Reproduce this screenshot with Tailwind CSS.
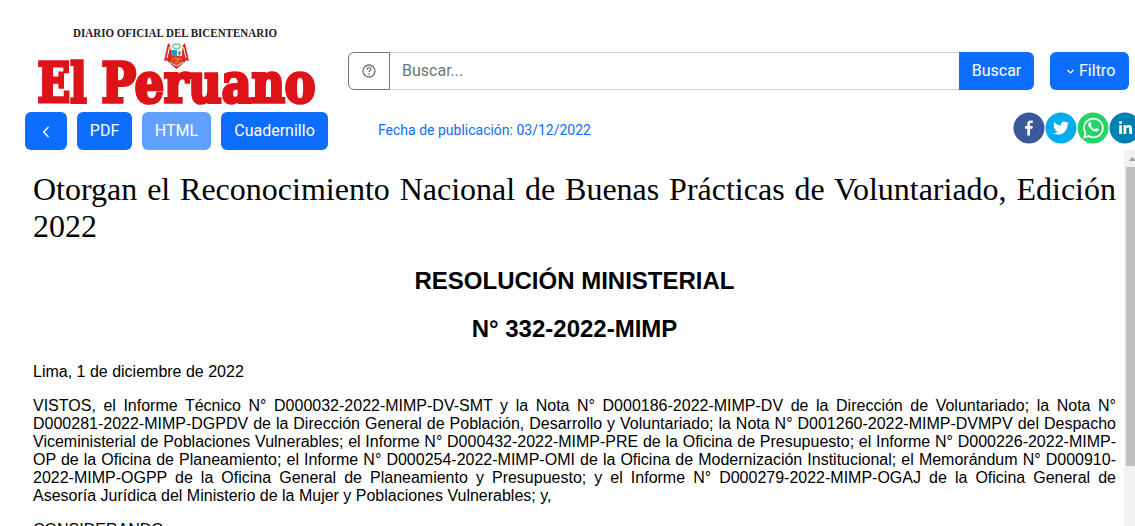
<!DOCTYPE html>
<html lang="es">
<head>
<meta charset="utf-8">
<title>El Peruano</title>
<script src="https://cdn.jsdelivr.net/npm/@tailwindcss/browser@4"></script>
</head>
<body class="bg-white w-[1135px] h-[526px] overflow-hidden flex flex-col font-['Roboto',sans-serif] text-base text-white">
<header class="h-28 shrink-0 flex">
  <svg class="w-[348px] h-28 shrink-0" viewBox="0 0 348 112">
    <text x="73" y="37" font-family="Liberation Serif" font-weight="700" font-size="11.5" fill="#222" textLength="204" lengthAdjust="spacingAndGlyphs">DIARIO OFICIAL DEL BICENTENARIO</text>
    <path d="M168 43l2 2 1.500 10 4 7-6-2-5.500 1zM185 43l-2 2-1.500 10-4 7 6-2 5.500 1z" fill="#d9262d"/>
    <path d="M169.500 47l-2.500 11M183.500 47l2.500 11" stroke="#fff" stroke-width="1"/>
    <path d="M167 61l9.500 8 9.500-8-4-3h-11z" fill="#c9282b"/>
    <path d="M169 62l7.500 4 7.500-4" fill="none" stroke="#f5d9d2" stroke-width="1"/>
    <path d="M171 50h11v8q0 5-5.500 7-5.500-2-5.500-7z" fill="#fff"/>
    <path d="M171 50h6v6h-6z" fill="#2f92c6"/>
    <path d="M177 50h5v6h-5z" fill="#e6f2e5"/>
    <path d="M179.500 51v5M178 53h3" stroke="#4ba35a" stroke-width="1.300"/>
    <path d="M171 56h11v2q0 5-5.500 7-5.500-2-5.500-7z" fill="#dc3b20"/>
    <path d="M173 60q3-4 4-1t3-1M175 62h3" fill="none" stroke="#f5a33a" stroke-width="1"/>
    <ellipse cx="176.500" cy="46.300" rx="3.700" ry="2.400" fill="none" stroke="#6fd292" stroke-width="1.500"/>
    <g font-family="DejaVu Serif" font-weight="700" font-size="55" fill="#de1219" stroke="#de1219" stroke-width="3.600">
      <text y="102" x="37.500" textLength="49" lengthAdjust="spacingAndGlyphs">El</text>
      <text y="102" x="101.500" textLength="214" lengthAdjust="spacingAndGlyphs">Peruano</text>
    </g>
  </svg>
  <div class="flex mt-[52px] h-[38px] w-[686px]">
    <div class="w-[42px] border border-[#6c757d] rounded-l-md flex items-center justify-center">
      <svg class="w-3.5 h-3.5" viewBox="0 0 14 14" fill="none" stroke="#6c757d" stroke-width="1.300"><circle cx="7" cy="7" r="6"/><path d="M5.100 5.700q0-2 1.900-2t1.900 1.700c0 1.200-1.900 1.200-1.900 2.700M7 9.300v1.400"/></svg>
    </div>
    <div class="flex-1 border-y border-[#ced4da] px-3 leading-9 text-[#6c757d]">Buscar...</div>
    <div class="w-[75px] bg-[#0d6efd] rounded-r-md text-center leading-[38px]">Buscar</div>
  </div>
  <div class="ml-4 mt-[52px] w-[79px] h-[38px] bg-[#0d6efd] rounded-md flex items-center pl-4 gap-1">
    <svg class="w-[9px] h-[9px] shrink-0 mt-px" viewBox="0 0 9 9" fill="none" stroke="#fff" stroke-width="1.200"><path d="M1.500 3l3 3 3-3"/></svg>
    <span>Filtro</span>
  </div>
</header>
<div class="h-[38px] shrink-0 flex pl-[25px] leading-[38px] text-center">
  <div class="shrink-0 w-[42px] bg-[#0d6efd] rounded-md flex items-center justify-center">
    <svg class="w-3 h-3 mt-0.5" viewBox="0 0 12 12" fill="none" stroke="#fff" stroke-width="1.400"><path d="M8.500 1L3.700 6l4.800 5"/></svg>
  </div>
  <div class="shrink-0 ml-2.5 w-[55px] bg-[#0d6efd] rounded-md">PDF</div>
  <div class="shrink-0 ml-2.5 w-[69px] bg-[#0d6efd] opacity-65 rounded-md">HTML</div>
  <div class="shrink-0 ml-2.5 w-[107px] bg-[#0d6efd] rounded-md">Cuadernillo</div>
  <div class="shrink-0 ml-[50px] w-[635px] text-left text-sm leading-[37px] text-[#0d6efd]">Fecha de publicación: 03/12/2022</div>
  <svg class="w-8 h-8 shrink-0" viewBox="0 0 64 64" fill="#fff"><circle cx="32" cy="32" r="31" fill="#3b5998"/><path d="M34.1,47V33.3h4.6l0.7-5.3h-5.3v-3.4c0-1.5,0.4-2.6,2.6-2.6l2.8,0v-4.8c-0.5-0.1-2.2-0.2-4.1-0.2 c-4.1,0-6.9,2.5-6.9,7V28H24v5.3h4.5V47H34.1z"/></svg>
  <svg class="w-8 h-8 shrink-0" viewBox="0 0 64 64" fill="#fff"><circle cx="32" cy="32" r="31" fill="#00aced"/><path d="M48,22.1c-1.2,0.5-2.4,0.9-3.8,1c1.4-0.8,2.4-2.1,2.9-3.6c-1.3,0.8-2.7,1.3-4.2,1.6 C41.7,19.8,40,19,38.2,19c-3.6,0-6.6,2.9-6.6,6.6c0,0.5,0.1,1,0.2,1.5c-5.5-0.3-10.3-2.9-13.5-6.9c-0.6,1-0.9,2.1-0.9,3.3 c0,2.3,1.2,4.3,2.9,5.5c-1.1,0-2.1-0.3-3-0.8c0,0,0,0.1,0,0.1c0,3.2,2.3,5.8,5.3,6.4c-0.6,0.1-1.1,0.2-1.7,0.2c-0.4,0-0.8,0-1.2-0.1 c0.8,2.6,3.3,4.5,6.1,4.6c-2.2,1.8-5.1,2.8-8.2,2.8c-0.5,0-1.1,0-1.6-0.1c2.9,1.9,6.4,2.9,10.1,2.9c12.1,0,18.7-10,18.7-18.7 c0-0.3,0-0.6,0-0.8C46,24.5,47.1,23.4,48,22.1z"/></svg>
  <svg class="w-8 h-8 shrink-0" viewBox="0 0 64 64" fill="#fff"><circle cx="32" cy="32" r="31" fill="#25d366"/><path fill-rule="evenodd" d="M47.500 17.400C43.600 13.600 38.400 11.400 32.900 11.400C21.500 11.400 12.300 20.600 12.300 32C12.300 35.600 13.200 39.100 15 42.200L12.100 52.900L23 50C26 51.700 29.400 52.500 32.900 52.500C44.300 52.500 53.500 43.300 53.500 32C53.500 26.500 51.400 21.300 47.500 17.400zM32.900 49C29.800 49 26.800 48.200 24.200 46.700L23.500 46.300L17.100 48L18.800 41.700L18.400 41C16.700 38.300 15.800 35.200 15.800 32C15.800 22.600 23.500 14.900 32.900 14.900C42.400 14.900 50.100 22.600 50.100 32C50.100 41.400 42.400 49 32.900 49z"/><path d="M42.300 33.900c-.5-.3-3-1.500-3.500-1.700s-.8-.2-1.200.3-1.300 1.700-1.600 2-.6.4-1.100.1-2.200-.8-4.200-2.600c-1.500-1.400-2.500-3-2.800-3.500s0-.8.200-1.100l.8-.9c.3-.3.300-.5.500-.9s.1-.6 0-.9-1.200-2.800-1.600-3.800-.8-.9-1.200-.9h-1c-.3 0-.9.100-1.400.6s-1.800 1.800-1.800 4.300 1.800 4.900 2.100 5.300 3.600 5.500 8.800 7.700c1.200.5 2.200.8 2.900 1.100 1.200.4 2.400.3 3.200.2 1-.2 3-1.300 3.500-2.500s.4-2.200.3-2.400-.5-.3-.9-.4z"/></svg>
  <svg class="w-8 h-8 shrink-0" viewBox="0 0 64 64" fill="#fff"><circle cx="32" cy="32" r="31" fill="#007fb1"/><path d="M20.4,44h5.4V26.6h-5.4V44z M23.1,18c-1.7,0-3.1,1.4-3.1,3.1c0,1.7,1.4,3.1,3.1,3.1 c1.7,0,3.1-1.4,3.1-3.1C26.2,19.4,24.8,18,23.1,18z M39.5,26.2c-2.6,0-4.4,1.4-5.1,2.8h-0.1v-2.4h-5.2V44h5.4v-8.6 c0-2.3,0.4-4.5,3.2-4.5c2.8,0,2.8,2.6,2.8,4.6V44H46v-9.5C46,29.800,45,26.2,39.5,26.2z"/></svg>
</div>
<div class="flex-1 min-h-0 flex text-black font-['Liberation_Sans',Arial,sans-serif]">
  <main class="w-[1124px] shrink-0 pl-[33px] pr-2 pt-[21px] overflow-hidden text-justify leading-[18px]">
    <h1 class="font-['Liberation_Serif',serif] text-[32px] leading-[37px]">Otorgan el Reconocimiento Nacional de Buenas Prácticas de Voluntariado, Edición 2022</h1>
    <h2 class="mt-[22px] text-center text-2xl leading-7 font-bold">RESOLUCIÓN MINISTERIAL</h2>
    <h2 class="mt-5 text-center text-2xl leading-7 font-bold">N° 332-2022-MIMP</h2>
    <p class="mt-5">Lima, 1 de diciembre de 2022</p>
    <p class="mt-4">VISTOS, el Informe Técnico N° D000032-2022-MIMP-DV-SMT y la Nota N° D000186-2022-MIMP-DV de la Dirección de Voluntariado; la Nota N° D000281-2022-MIMP-DGPDV de la Dirección General de Población, Desarrollo y Voluntariado; la Nota N° D001260-2022-MIMP-DVMPV del Despacho Viceministerial de Poblaciones Vulnerables; el Informe N° D000432-2022-MIMP-PRE de la Oficina de Presupuesto; el Informe N° D000226-2022-MIMP-OP de la Oficina de Planeamiento; el Informe N° D000254-2022-MIMP-OMI de la Oficina de Modernización Institucional; el Memorándum N° D000910-2022-MIMP-OGPP de la Oficina General de Planeamiento y Presupuesto; y el Informe N° D000279-2022-MIMP-OGAJ de la Oficina General de Asesoría Jurídica del Ministerio de la Mujer y Poblaciones Vulnerables; y,</p>
    <p class="mt-4">CONSIDERANDO:</p>
  </main>
  <div class="flex-1 bg-[#f1f1f1] flex flex-col items-end">
    <svg class="w-[11px] h-[17px]" viewBox="0 0 11 17"><path d="M4.500 11L8.500 7l4 4z" fill="#a3a3a3"/></svg>
    <div class="w-[9px] h-[299px] bg-[#c1c1c1]"></div>
  </div>
</div>
</body>
</html>
